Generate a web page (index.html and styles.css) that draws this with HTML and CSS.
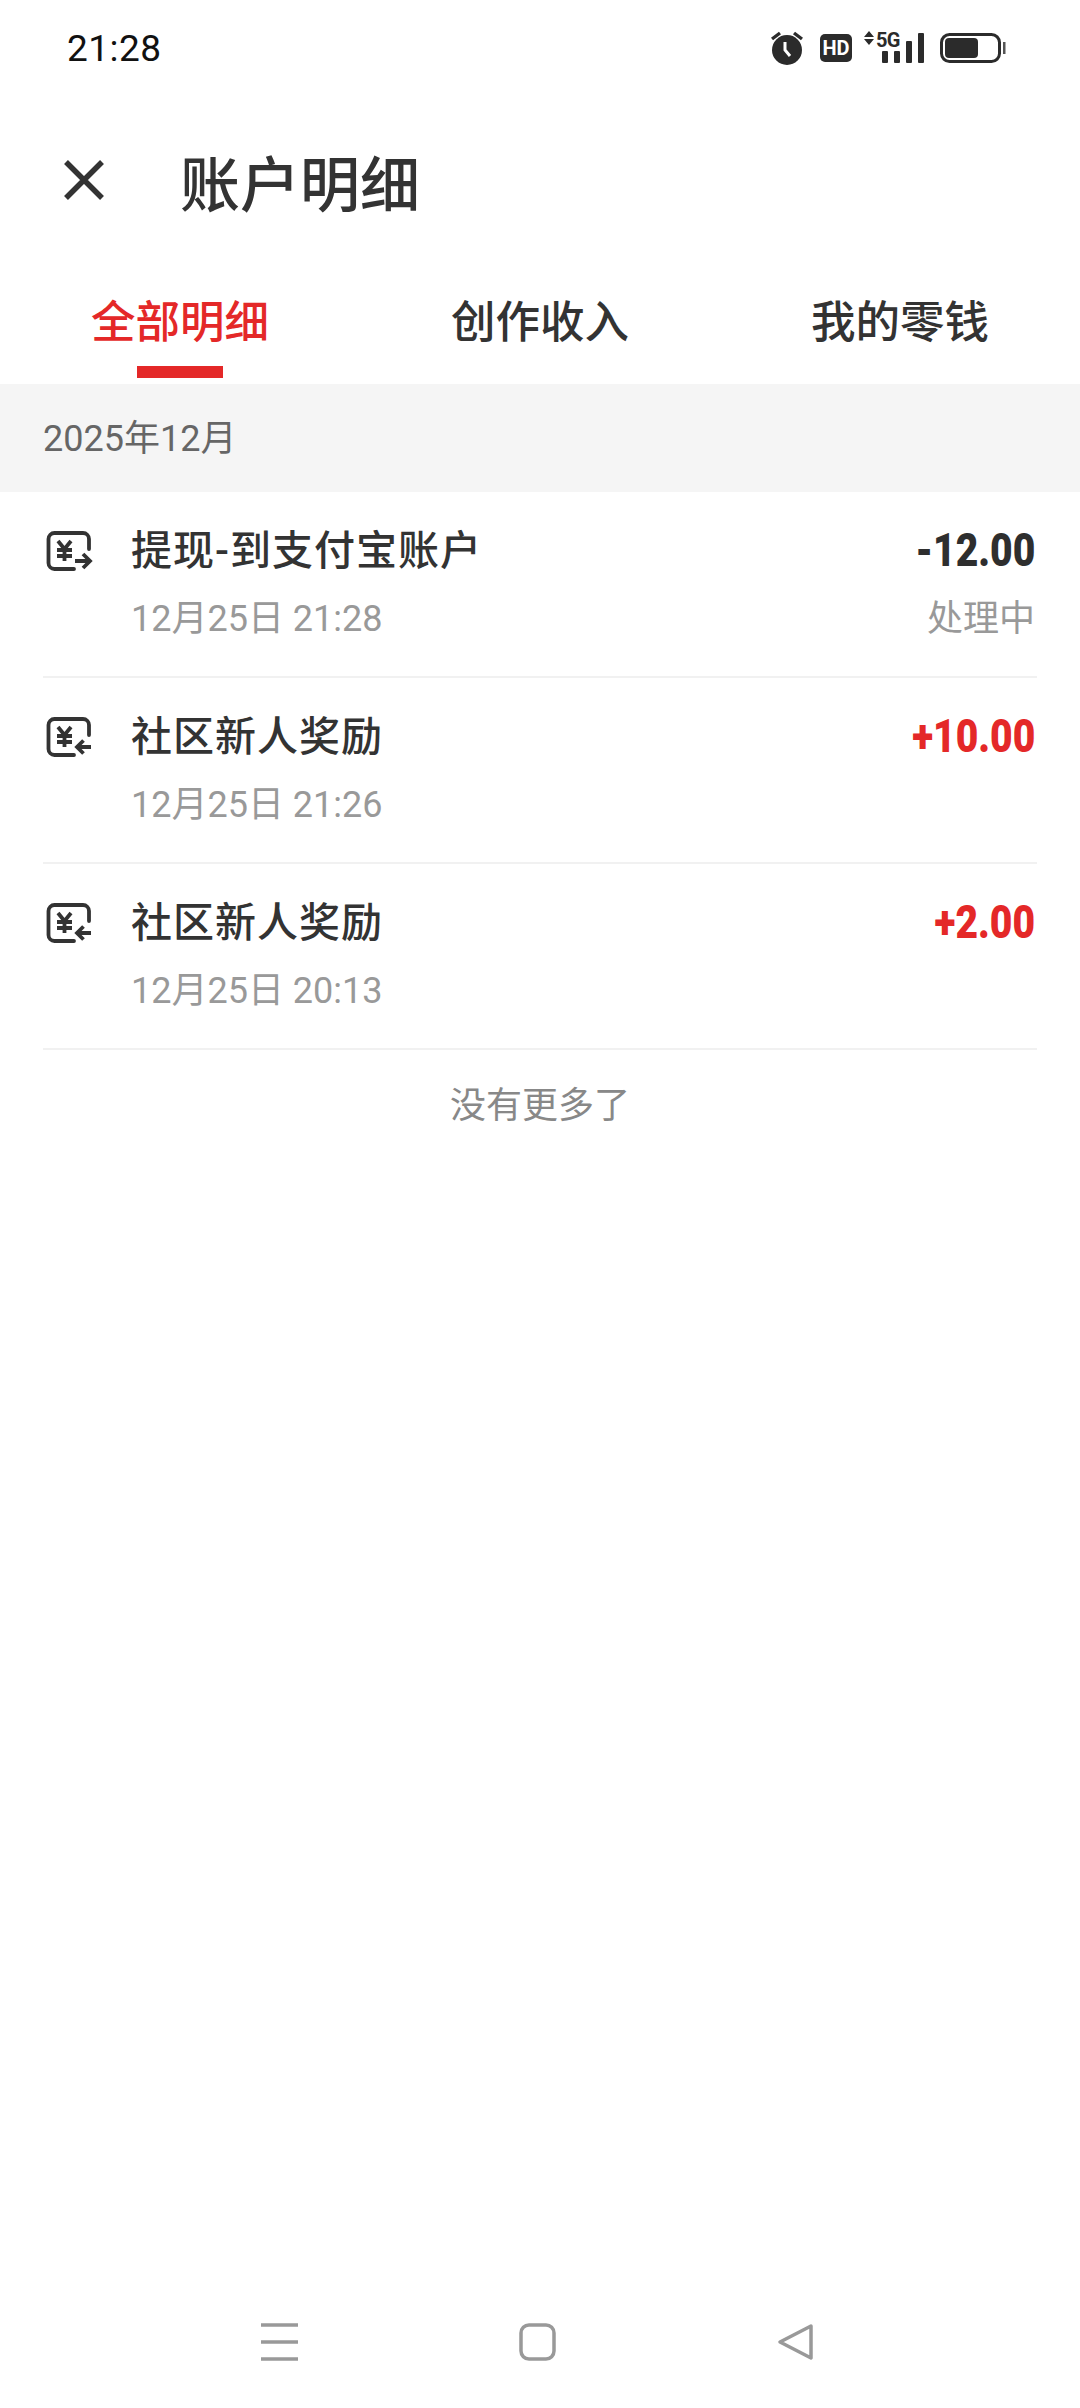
FILE: index.html
```html
<!DOCTYPE html>
<html lang="zh-CN">
<head>
<meta charset="utf-8">
<title>账户明细</title>
<link rel="stylesheet" href="styles.css">
</head>
<body>
<div class="screen">
  <div class="status">
    <span class="time">21:28</span>
    <div class="status-icons">
      <svg class="ic-alarm" width="32" height="34" viewBox="0 0 32 34"><circle cx="16" cy="19" r="15" fill="#2b2b2b"/><path d="M14 11v8l5 6" fill="none" stroke="#fff" stroke-width="3"/><path d="M1 8 9 2M31 8 23 2" stroke="#2b2b2b" stroke-width="3.4" fill="none"/></svg>
      <svg class="ic-hd" width="32" height="28" viewBox="0 0 32 28"><rect width="32" height="28" rx="5" fill="#2b2b2b"/><text x="16" y="21" class="ic-hd-text" text-anchor="middle">HD</text></svg>
      <svg class="ic-net" width="60" height="34" viewBox="0 0 60 34"><path d="M5 0 10 6H0ZM5 14 10 8H0Z" fill="#2b2b2b"/><rect x="18" y="20" width="6" height="12" rx="1" fill="#2b2b2b"/><rect x="30" y="20" width="6" height="12" rx="1" fill="#2b2b2b"/><rect x="42" y="10" width="6" height="22" rx="1" fill="#2b2b2b"/><rect x="54" y="2" width="6" height="30" rx="1" fill="#2b2b2b"/></svg>
      <span class="net-label">5G</span>
      <svg class="ic-batt" width="66" height="30" viewBox="0 0 66 30"><rect x="1.5" y="1.5" width="58" height="27" rx="8" fill="none" stroke="#2b2b2b" stroke-width="3"/><rect x="5" y="5" width="33" height="20" rx="4" fill="#2b2b2b"/><rect x="63" y="9" width="2.5" height="12" fill="#555"/></svg>
    </div>
  </div>

  <header class="title-bar">
    <svg class="close" width="44" height="44" viewBox="0 0 44 44"><path d="M4 4 40 40M40 4 4 40" stroke="#333" stroke-width="5.5" fill="none"/></svg>
    <h1 class="title">账户明细</h1>
  </header>

  <nav class="tabs">
    <div class="tab tab-active">全部明细</div>
    <div class="tab">创作收入</div>
    <div class="tab">我的零钱</div>
  </nav>

  <div class="month">2025年12月</div>

  <ul class="list">
    <li class="row">
      <svg class="row-icon" width="48" height="42" viewBox="0 0 48 42"><path d="M44 19V9a6 6 0 0 0-6-6H9.500a6 6 0 0 0-6 6v24a6 6 0 0 0 6 6H29" fill="none" stroke="#333" stroke-width="3.8" stroke-linecap="round"/><path d="M13 11l6.500 8 6.500-8M12 20h15M12 26h15M19.500 19v12" fill="none" stroke="#333" stroke-width="3.800"/><path d="M30 31H45M38 24l7 7-7 7" fill="none" stroke="#333" stroke-width="3.800"/></svg>
      <div class="row-main">
        <div class="row-title">提现-到支付宝账户</div>
        <div class="row-date">12月25日 21:28</div>
      </div>
      <div class="row-side">
        <div class="amount">-12.00</div>
        <div class="state">处理中</div>
      </div>
    </li>
    <li class="row">
      <svg class="row-icon" width="48" height="42" viewBox="0 0 48 42"><path d="M44 19V9a6 6 0 0 0-6-6H9.500a6 6 0 0 0-6 6v24a6 6 0 0 0 6 6H29" fill="none" stroke="#333" stroke-width="3.8" stroke-linecap="round"/><path d="M13 11l6.500 8 6.500-8M12 20h15M12 26h15M19.500 19v12" fill="none" stroke="#333" stroke-width="3.800"/><path d="M46 31H32M38.500 24.500l-6.500 6.500 6.500 6.500" fill="none" stroke="#333" stroke-width="3.800"/></svg>
      <div class="row-main">
        <div class="row-title">社区新人奖励</div>
        <div class="row-date">12月25日 21:26</div>
      </div>
      <div class="row-side">
        <div class="amount amount-plus">+10.00</div>
      </div>
    </li>
    <li class="row">
      <svg class="row-icon" width="48" height="42" viewBox="0 0 48 42"><path d="M44 19V9a6 6 0 0 0-6-6H9.500a6 6 0 0 0-6 6v24a6 6 0 0 0 6 6H29" fill="none" stroke="#333" stroke-width="3.8" stroke-linecap="round"/><path d="M13 11l6.500 8 6.500-8M12 20h15M12 26h15M19.500 19v12" fill="none" stroke="#333" stroke-width="3.800"/><path d="M46 31H32M38.500 24.500l-6.500 6.500 6.500 6.500" fill="none" stroke="#333" stroke-width="3.800"/></svg>
      <div class="row-main">
        <div class="row-title">社区新人奖励</div>
        <div class="row-date">12月25日 20:13</div>
      </div>
      <div class="row-side">
        <div class="amount amount-plus">+2.00</div>
      </div>
    </li>
  </ul>

  <div class="no-more">没有更多了</div>

  <div class="nav-bar">
    <svg width="37" height="38" viewBox="0 0 37 38"><path d="M0 2h37M0 19h37M0 36h37" stroke="#999" stroke-width="3.500"/></svg>
    <svg width="37" height="38" viewBox="0 0 37 38"><rect x="2" y="2" width="33" height="34" rx="8" fill="none" stroke="#999" stroke-width="3.500"/></svg>
    <svg width="37" height="38" viewBox="0 0 37 38"><path d="M34 3 3 19l31 16Z" fill="none" stroke="#999" stroke-width="3.500" stroke-linejoin="round"/></svg>
  </div>
</div>
</body>
</html>
```

FILE: styles.css
```css
* { box-sizing: border-box; }
html, body { margin: 0; padding: 0; background: #fff; }
.screen {
  width: 1080px;
  height: 2408px;
  display: flex;
  flex-direction: column;
  font-family: Roboto, "Noto Sans CJK SC", sans-serif;
  color: #333;
  overflow: hidden;
}
.status {
  height: 96px;
  flex: none;
  display: flex;
  align-items: center;
  justify-content: space-between;
  padding: 0 74px 0 67px;
}
.time { font-size: 37px; color: #111; letter-spacing: 0.5px; }
.status-icons { display: flex; align-items: center; gap: 14px; position: relative; }
.ic-alarm { margin-right: 3px; }
.ic-hd { margin-right: -2px; }
.ic-net { margin-right: 2px; }
.net-label {
  position: absolute;
  right: 106px;
  top: -1px;
  font-size: 20px;
  font-weight: 700;
  line-height: 20px;
  letter-spacing: -0.5px;
  color: #2b2b2b;
}
.ic-hd-text { font: 700 20px Roboto, sans-serif; fill: #fff; }
.title-bar {
  height: 168px;
  flex: none;
  display: flex;
  align-items: center;
  padding-left: 62px;
  gap: 74px;
}
.title { margin: 0; font-size: 60px; font-weight: 500; color: #333; }
.tabs { height: 120px; flex: none; display: flex; }
.tab {
  flex: 1;
  text-align: center;
  font-size: 44.5px;
  font-weight: 500;
  line-height: 52px;
  padding-top: 33px;
  color: #333;
  position: relative;
}
.tab-active { color: #e42828; }
.tab-active::after {
  content: "";
  position: absolute;
  left: 50%;
  bottom: 6px;
  width: 86px;
  height: 12px;
  margin-left: -43px;
  background: #e42828;
}
.month {
  height: 108px;
  flex: none;
  background: #f5f5f5;
  display: flex;
  align-items: center;
  padding: 0 0 6px 43px;
  font-size: 36px;
  color: #666;
}
.list { list-style: none; margin: 0 43px; padding: 0; }
.row {
  height: 186px;
  display: flex;
  border-bottom: 2px solid #f1f1f1;
  padding-top: 38px;
}
.row-icon { flex: none; margin: 0 38px 0 2px; }
.row-main { flex: 1; }
.row-title { font-size: 41px; font-weight: 500; line-height: 46px; letter-spacing: 1px; color: #333; margin-top: -2px; }
.row-date { font-size: 36px; line-height: 44px; margin-top: 23px; color: #999; }
.row-side { text-align: right; padding-right: 2px; }
.amount {
  font-size: 47px;
  font-weight: 900;
  line-height: 46px;
  color: #2e2e2e;
  margin-top: -3px;
  transform: scaleX(0.83);
  transform-origin: right center;
}
.amount-plus { color: #e42828; }
.state { font-size: 36px; line-height: 44px; margin-top: 24px; color: #999; }
.no-more { text-align: center; font-size: 36px; line-height: 44px; margin-top: 34px; color: #888; }
.nav-bar {
  margin-top: auto;
  height: 85px;
  flex: none;
  display: flex;
  align-items: flex-start;
  padding-left: 261px;
  gap: 221px;
}
```
